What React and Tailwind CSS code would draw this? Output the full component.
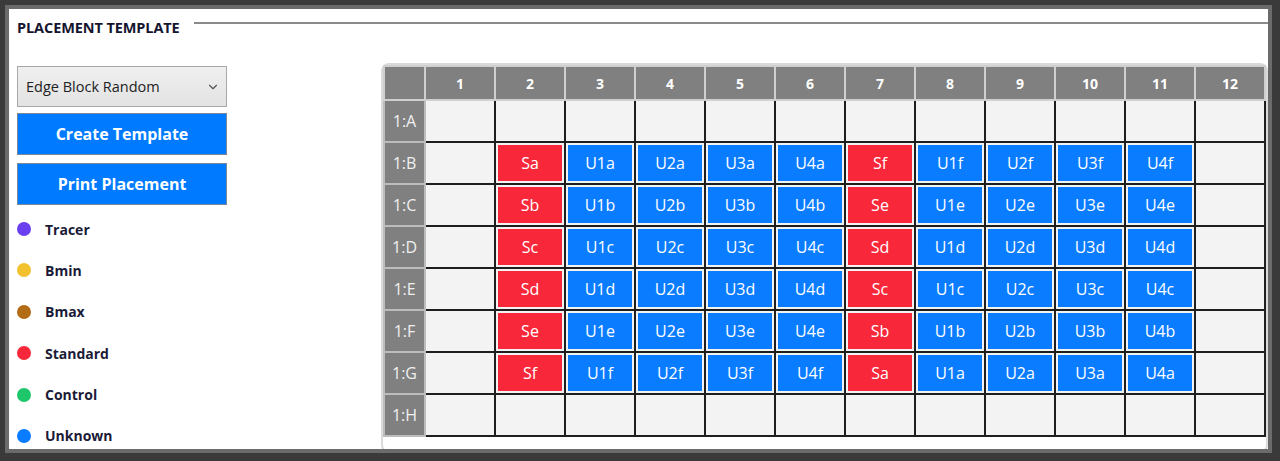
import React from "react";
import { ChevronDown } from "lucide-react";

/* ---------- Data ---------- */
const COLS = [1, 2, 3, 4, 5, 6, 7, 8, 9, 10, 11, 12];
const ROWS = ["A", "B", "C", "D", "E", "F", "G", "H"];

const LEGEND = [
  { label: "Tracer", color: "bg-[#6a3ff0]" },
  { label: "Bmin", color: "bg-[#f2c12e]" },
  { label: "Bmax", color: "bg-[#b36b16]" },
  { label: "Standard", color: "bg-[#f8283a]" },
  { label: "Control", color: "bg-[#1ec66a]" },
  { label: "Unknown", color: "bg-[#0a7cff]" },
];

function cellFor(rowIdx, col) {
  // rows B..G carry samples, A and H are edge blocks
  if (rowIdx < 1 || rowIdx > 6) return null;
  const i = rowIdx - 1;
  const left = "abcdef"[i];
  const right = "fedcba"[i];
  if (col === 2) return { text: "S" + left, std: true };
  if (col >= 3 && col <= 6) return { text: `U${col - 2}${left}`, std: false };
  if (col === 7) return { text: "S" + right, std: true };
  if (col >= 8 && col <= 11) return { text: `U${col - 7}${right}`, std: false };
  return null;
}

export default function App() {
  return (
    <div
      className="w-[1280px] h-[461px] bg-[#3a3a3a] pt-[5px] pl-[5px] pr-[8px] pb-[8px]"
      style={{ fontFamily: '"Open Sans", "Noto Sans", sans-serif' }}
    >
      <div className="h-full border-4 border-[#6b6b6b] bg-white overflow-hidden">
        {/* Header */}
        <div className="flex items-start pl-2 pt-[9px] h-[55px]">
          <span className="text-[14.5px] font-bold text-[#151530] leading-[20px] tracking-[-0.1px]">
            PLACEMENT TEMPLATE
          </span>
          <div className="flex-1 h-[2px] bg-[#8a8a8a] ml-[14px] mt-[4px]" />
        </div>

        <div className="flex pl-2">
          {/* Left controls */}
          <div className="w-[210px] flex flex-col">
            <div className="mt-[2px] h-[41px] border border-[#a8a8a8] bg-gradient-to-b from-[#efefef] to-[#e3e3e3] flex items-center justify-between pl-[8px] pr-[6px]">
              <span className="text-[14.5px] text-[#222]">Edge Block Random</span>
              <ChevronDown size={14} strokeWidth={2} className="text-[#555]" />
            </div>
            <button className="mt-[6px] h-[42px] bg-[#007bff] border border-[#7a8a9a] text-white font-bold text-[16px]">
              Create Template
            </button>
            <button className="mt-[8px] h-[42px] bg-[#007bff] border border-[#7a8a9a] text-white font-bold text-[16px]">
              Print Placement
            </button>
            <div className="mt-[17px] flex flex-col gap-[27.4px]">
              {LEGEND.map((l) => (
                <div key={l.label} className="flex items-center h-[14px]">
                  <span className={`w-[14px] h-[14px] rounded-full ${l.color}`} />
                  <span className="ml-[14px] text-[14px] font-bold text-[#1b1b38]">
                    {l.label}
                  </span>
                </div>
              ))}
            </div>
          </div>

          {/* Plate grid */}
          <div className="ml-auto -mt-[1px] w-[887px] h-[390px] border-2 border-[#dadada] rounded-lg">
            <table className="border-collapse table-fixed w-[883px]">
              <colgroup>
                <col className="w-[41px]" />
                {COLS.map((c) => (
                  <col key={c} className="w-[70px]" />
                ))}
              </colgroup>
              <thead>
                <tr className="h-[34px]">
                  <th className="bg-[#808080] border-2 border-[#cfcfcf]" />
                  {COLS.map((c) => (
                    <th
                      key={c}
                      className="bg-[#808080] border-2 border-[#cfcfcf] text-white text-[14px] font-bold"
                    >
                      {c}
                    </th>
                  ))}
                </tr>
              </thead>
              <tbody>
                {ROWS.map((r, ri) => (
                  <tr key={r} className="h-[42px]">
                    <th className="bg-[#808080] border-2 border-[#bdbdbd] text-[#f0f0f0] text-[16px] font-normal">
                      1:{r}
                    </th>
                    {COLS.map((c) => {
                      const cell = cellFor(ri, c);
                      return (
                        <td key={c} className="bg-[#f3f3f3] border-2 border-[#1e1e1e] p-0">
                          {cell && (
                            <div
                              className={`mx-[2px] h-[36px] flex items-center justify-center text-white text-[16px] ${
                                cell.std ? "bg-[#f8283a]" : "bg-[#0a7cff]"
                              }`}
                            >
                              {cell.text}
                            </div>
                          )}
                        </td>
                      );
                    })}
                  </tr>
                ))}
              </tbody>
            </table>
          </div>
        </div>
      </div>
    </div>
  );
}
